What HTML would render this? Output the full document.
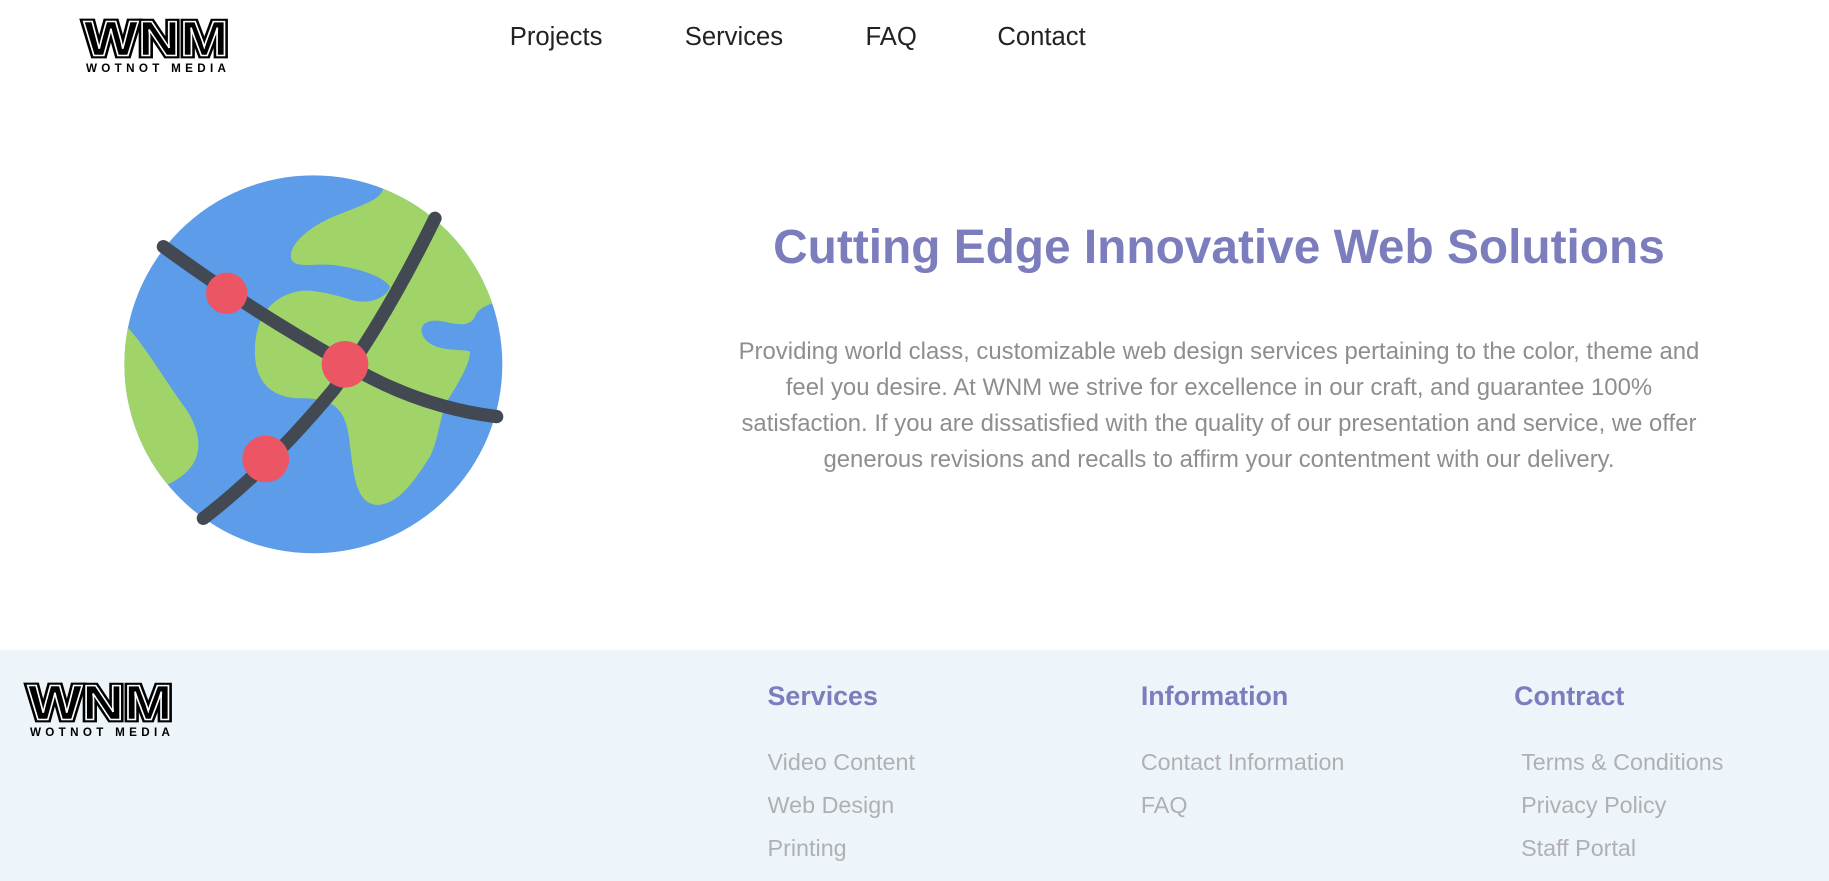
<!DOCTYPE html>
<html><head><meta charset="utf-8"><style>
html{zoom:1.1665}
body{margin:0;width:1568px;height:755px;overflow:hidden;background:#fff;font-family:"Liberation Sans",Arial,sans-serif;position:relative}
.a{position:absolute}
.nav{top:20px;font-size:22px;color:#222}
h1{position:absolute;left:545px;width:1000px;text-align:center;top:189px;margin:0;font-size:41px;font-weight:bold;color:#7c7dbd}
p.t{position:absolute;left:620px;width:850px;text-align:center;top:286px;margin:0;font-size:20.5px;line-height:31px;color:#8e8e8e}
.foot{top:557px;left:0;width:1568px;height:198px;background:#edf5fa}
.fh{font-size:23px;font-weight:bold;color:#7c7dbd;top:584px}
.fl{font-size:20px;color:#b0b0b4;line-height:37px;top:635px}
</style></head><body>
<svg class="a" style="left:68px;top:14px" width="132" height="50" viewBox="0 0 132 50">
<text x="66" y="34" text-anchor="middle" font-family="Liberation Sans" font-weight="bold" font-size="42" textLength="124" lengthAdjust="spacingAndGlyphs" fill="#000" stroke="#000" stroke-width="5">WNM</text>
<text x="66" y="34" text-anchor="middle" font-family="Liberation Sans" font-weight="bold" font-size="42" textLength="124" lengthAdjust="spacingAndGlyphs" fill="#000" stroke="#fff" stroke-width="1.2">WNM</text>
<text x="66" y="48" text-anchor="middle" font-family="Liberation Sans" font-weight="bold" font-size="10" textLength="120" lengthAdjust="spacing" fill="#000">WOTNOT MEDIA</text>
</svg>
<div class="a nav" style="left:437px">Projects</div>
<div class="a nav" style="left:587px">Services</div>
<div class="a nav" style="left:742px">FAQ</div>
<div class="a nav" style="left:855px">Contact</div>

<svg class="a" style="left:85.7px;top:128.6px" width="385.8" height="360" viewBox="0 0 1350 1260">
<defs><clipPath id="c"><circle cx="640" cy="643" r="567"/></clipPath></defs>
<circle cx="640" cy="643" r="567" fill="#5d9ce8"/>
<g clip-path="url(#c)" fill="#a0d468">
<path d="M850 115 C840 150 800 160 700 200 C620 235 560 290 575 330 C590 355 640 340 700 345 C780 355 850 380 870 410 C860 445 800 470 740 445 C690 430 620 415 590 425 C500 445 460 520 465 620 C470 700 520 745 600 745 C680 745 730 760 745 850 C760 950 760 1060 830 1065 C900 1065 950 980 990 920 C1020 860 1020 780 1050 740 C1080 690 1110 640 1110 605 C1090 595 1000 610 970 560 C950 520 990 505 1030 515 C1080 525 1110 530 1125 500 C1130 480 1160 465 1180 460 L1300 300 L900 50 Z"/>
<path d="M80 530 C130 580 200 700 260 780 C310 860 320 950 200 1005 L0 1100 L0 500 Z"/>
</g>
<g fill="none" stroke="#424953" stroke-width="40" stroke-linecap="round">
<path d="M190 290 Q450 480 735 640 Q950 770 1190 800"/>
<path d="M1005 205 Q850 520 700 720 Q500 960 310 1105"/>
</g>
<g fill="#ec5564"><circle cx="380" cy="430" r="62"/><circle cx="735" cy="643" r="70"/><circle cx="497" cy="927" r="70"/></g>
</svg>

<h1>Cutting Edge Innovative Web Solutions</h1>
<p class="t">Providing world class, customizable web design services pertaining to the color, theme and feel you desire. At WNM we strive for excellence in our craft, and guarantee 100% satisfaction. If you are dissatisfied with the quality of our presentation and service, we offer generous revisions and recalls to affirm your contentment with our delivery.</p>

<div class="a foot"></div>
<svg class="a" style="left:20px;top:583px" width="132" height="50" viewBox="0 0 132 50">
<text x="66" y="34" text-anchor="middle" font-family="Liberation Sans" font-weight="bold" font-size="42" textLength="124" lengthAdjust="spacingAndGlyphs" fill="#000" stroke="#000" stroke-width="5">WNM</text>
<text x="66" y="34" text-anchor="middle" font-family="Liberation Sans" font-weight="bold" font-size="42" textLength="124" lengthAdjust="spacingAndGlyphs" fill="#000" stroke="#fff" stroke-width="1.2">WNM</text>
<text x="66" y="48" text-anchor="middle" font-family="Liberation Sans" font-weight="bold" font-size="10" textLength="120" lengthAdjust="spacing" fill="#000">WOTNOT MEDIA</text>
</svg>
<div class="a fh" style="left:658px">Services</div>
<div class="a fh" style="left:978px">Information</div>
<div class="a fh" style="left:1298px">Contract</div>
<div class="a fl" style="left:658px">Video Content<br>Web Design<br>Printing</div>
<div class="a fl" style="left:978px">Contact Information<br>FAQ</div>
<div class="a fl" style="left:1304px">Terms &amp; Conditions<br>Privacy Policy<br>Staff Portal</div>
</body></html>
